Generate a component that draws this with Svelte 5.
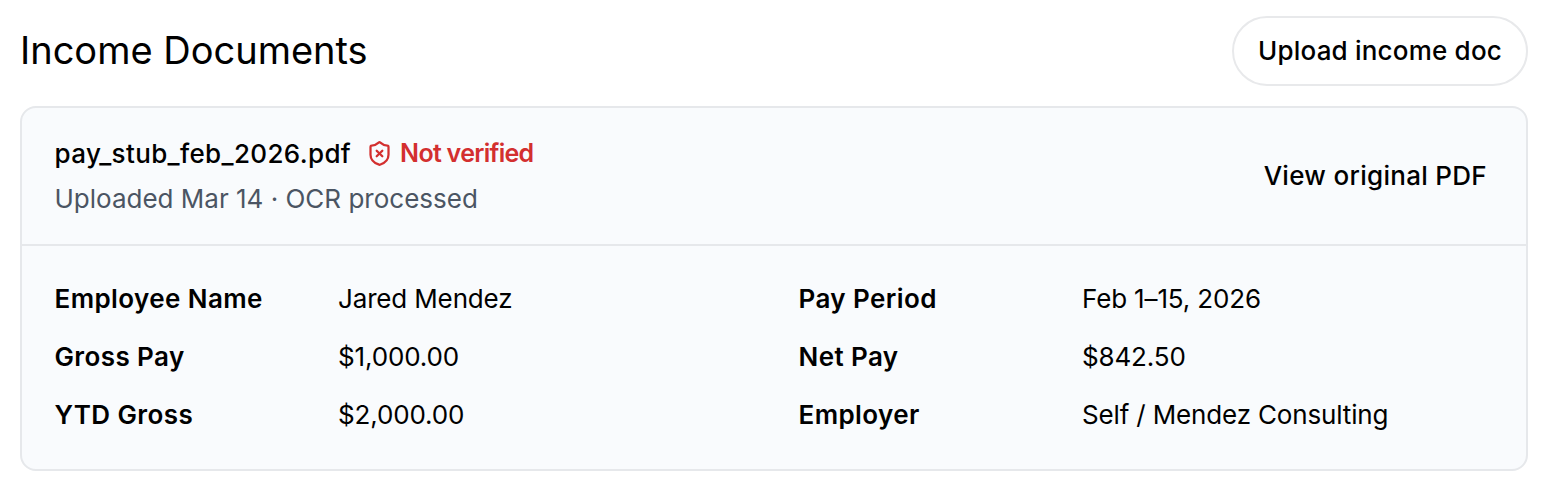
<script>
  const fields = [
    { label: 'Employee Name', value: 'Jared Mendez' },
    { label: 'Pay Period', value: 'Feb 1–15, 2026' },
    { label: 'Gross Pay', value: '$1,000.00' },
    { label: 'Net Pay', value: '$842.50' },
    { label: 'YTD Gross', value: '$2,000.00' },
    { label: 'Employer', value: 'Self / Mendez Consulting' }
  ];
</script>

<div class="page">
  <div class="top">
    <h2>Income Documents</h2>
    <button class="upload">Upload income doc</button>
  </div>

  <div class="card">
    <div class="card-head">
      <div class="file">
        <div class="file-row">
          <span class="name">pay_stub_feb_2026.pdf</span>
          <span class="status">
            <svg width="27" height="27" viewBox="0 0 24 24" fill="none" stroke="currentColor" stroke-width="2" stroke-linecap="round" stroke-linejoin="round">
              <path d="M20 13c0 5-3.5 7.5-7.66 8.95a1 1 0 0 1-.67-.01C7.5 20.5 4 18 4 13V6a1 1 0 0 1 1-1c2 0 4.5-1.2 6.24-2.72a1.17 1.17 0 0 1 1.52 0C14.51 3.81 17 5 19 5a1 1 0 0 1 1 1z" />
              <path d="m14.5 9.5-5 5" />
              <path d="m9.5 9.5 5 5" />
            </svg>
            Not verified
          </span>
        </div>
        <div class="meta">Uploaded Mar 14 · OCR processed</div>
      </div>
      <span class="view">View original PDF</span>
    </div>

    <div class="fields">
      {#each fields as field}
        <div class="field">
          <span class="label">{field.label}</span>
          <span class="value">{field.value}</span>
        </div>
      {/each}
    </div>
  </div>
</div>

<style>
  :global(body) {
    margin: 0;
    background: #fff;
  }

  .page {
    padding: 16px 24px 18px 20px;
    font-family: Inter, "Liberation Sans", sans-serif;
    color: #000;
  }

  .top {
    display: flex;
    align-items: center;
    justify-content: space-between;
    margin-bottom: 20px;
  }

  h2 {
    margin: 0 0 2px;
    font-size: 38px;
    font-weight: 400;
  }

  .upload {
    height: 70px;
    padding: 0 24px 2px;
    border: 2px solid #e8e9eb;
    border-radius: 35px;
    background: #fff;
    color: #000;
    font: 500 26px Inter, "Liberation Sans", sans-serif;
    letter-spacing: 0.2px;
  }

  .card {
    border: 2px solid #e6e8eb;
    border-radius: 16px;
    background: #f9fbfd;
  }

  .card-head {
    display: flex;
    align-items: center;
    justify-content: space-between;
    height: 136px;
    padding: 0 39px 0 32.5px;
    border-bottom: 2px solid #e6e8eb;
  }

  .file-row {
    display: flex;
    align-items: center;
    gap: 15px;
    height: 32px;
    margin-bottom: 14px;
  }

  .name {
    font-size: 26px;
    font-weight: 500;
    letter-spacing: 0.36px;
  }

  .status {
    display: flex;
    align-items: center;
    gap: 7px;
    color: #d32f2f;
    font-size: 25px;
    font-weight: 600;
    letter-spacing: -0.7px;
  }

  .meta {
    color: #4b5563;
    font-size: 26px;
    line-height: 32px;
  }

  .view {
    margin-bottom: 2px;
    font-size: 26px;
    font-weight: 500;
    letter-spacing: 0.3px;
  }

  .fields {
    display: grid;
    grid-template-columns: 744px 1fr;
    row-gap: 26px;
    padding: 37px 32.5px 38px;
  }

  .field {
    display: grid;
    grid-template-columns: 283.5px 1fr;
    font-size: 26px;
    line-height: 32px;
  }

  .label {
    font-weight: 600;
    letter-spacing: 0.4px;
  }

  .value {
    letter-spacing: -0.15px;
  }
</style>
